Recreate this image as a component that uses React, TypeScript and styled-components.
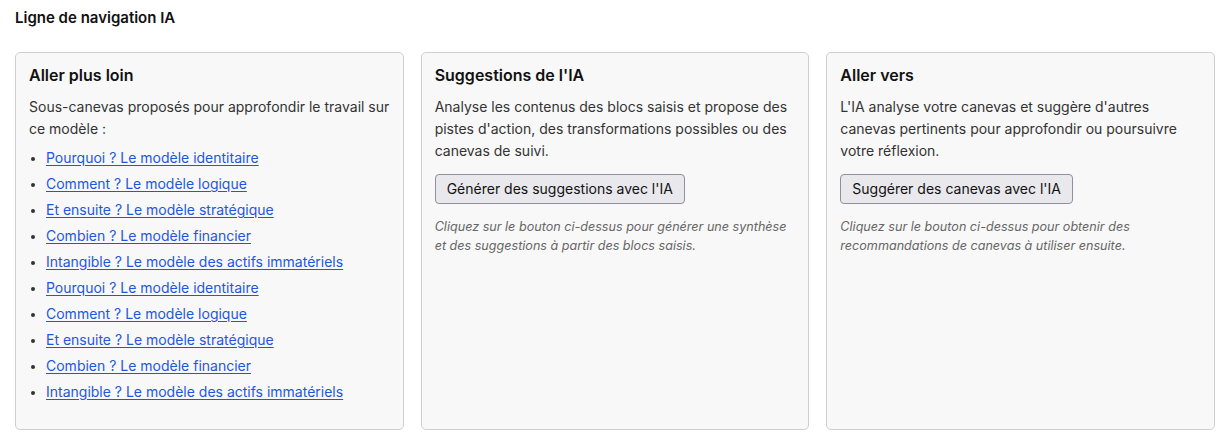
import { FC } from 'react';
import styled, { createGlobalStyle } from 'styled-components';

const GlobalStyle = createGlobalStyle`
  body {
    margin: 0;
    background: #ffffff;
    font-family: Inter, "Liberation Sans", Arial, sans-serif;
    color: #1f1f1f;
  }
`;

const Page = styled.div`
  padding: 8px 15px 10px;
`;

const PageTitle = styled.h3`
  margin: 0 0 24px;
  font-size: 15px;
  line-height: 20px;
  font-weight: 600;
  color: #111;
`;

const Columns = styled.div`
  display: grid;
  grid-template-columns: repeat(3, 1fr);
  gap: 17px;
  align-items: stretch;
`;

const Panel = styled.section`
  background: #f8f8f8;
  border: 1px solid #cfcfcf;
  border-radius: 5px;
  padding: 12px 13px 21px;
`;

const PanelTitle = styled.h4`
  margin: 0 0 11px;
  font-size: 16px;
  line-height: 20px;
  font-weight: 600;
  color: #111;
`;

const Text = styled.p`
  margin: 0;
  font-size: 14px;
  line-height: 22px;
  color: #333;
`;

const LinkList = styled.ul`
  margin: 8px 0 0;
  padding-left: 17px;
`;

const LinkItem = styled.li`
  font-size: 14px;
  line-height: 20px;
  margin-bottom: 6px;
  color: #333;
  &::marker {
    font-size: 12px;
  }
`;

const Link = styled.a`
  color: #1f56e0;
  text-decoration: underline;
  text-underline-offset: 2px;
`;

const Button = styled.button`
  margin-top: 12px;
  font-family: inherit;
  font-size: 14px;
  line-height: 18px;
  padding: 5px 11px;
  color: #111;
  background: #e9e9ed;
  border: 1px solid #8f8f9d;
  border-radius: 4px;
`;

const Hint = styled.p`
  margin: 13px 0 0;
  font-size: 12.6px;
  line-height: 19px;
  font-style: italic;
  color: #666;
`;

const links = [
  'Pourquoi ? Le modèle identitaire',
  'Comment ? Le modèle logique',
  'Et ensuite ? Le modèle stratégique',
  'Combien ? Le modèle financier',
  'Intangible ? Le modèle des actifs immatériels',
];

const App: FC = () => {
  return (
    <Page>
      <GlobalStyle />
      <PageTitle>Ligne de navigation IA</PageTitle>
      <Columns>
        <Panel>
          <PanelTitle>Aller plus loin</PanelTitle>
          <Text>Sous-canevas proposés pour approfondir le travail sur ce modèle :</Text>
          <LinkList>
            {[...links, ...links].map((label, i) => (
              <LinkItem key={i}>
                <Link href="#">{label}</Link>
              </LinkItem>
            ))}
          </LinkList>
        </Panel>
        <Panel>
          <PanelTitle>Suggestions de l'IA</PanelTitle>
          <Text>
            Analyse les contenus des blocs saisis et propose des pistes d'action, des transformations
            possibles ou des canevas de suivi.
          </Text>
          <Button>Générer des suggestions avec l'IA</Button>
          <Hint>
            Cliquez sur le bouton ci-dessus pour générer une synthèse et des suggestions à partir des
            blocs saisis.
          </Hint>
        </Panel>
        <Panel>
          <PanelTitle>Aller vers</PanelTitle>
          <Text>
            L'IA analyse votre canevas et suggère d'autres canevas pertinents pour approfondir ou
            poursuivre votre réflexion.
          </Text>
          <Button>Suggérer des canevas avec l'IA</Button>
          <Hint>
            Cliquez sur le bouton ci-dessus pour obtenir des recommandations de canevas à utiliser
            ensuite.
          </Hint>
        </Panel>
      </Columns>
    </Page>
  );
};

export default App;
